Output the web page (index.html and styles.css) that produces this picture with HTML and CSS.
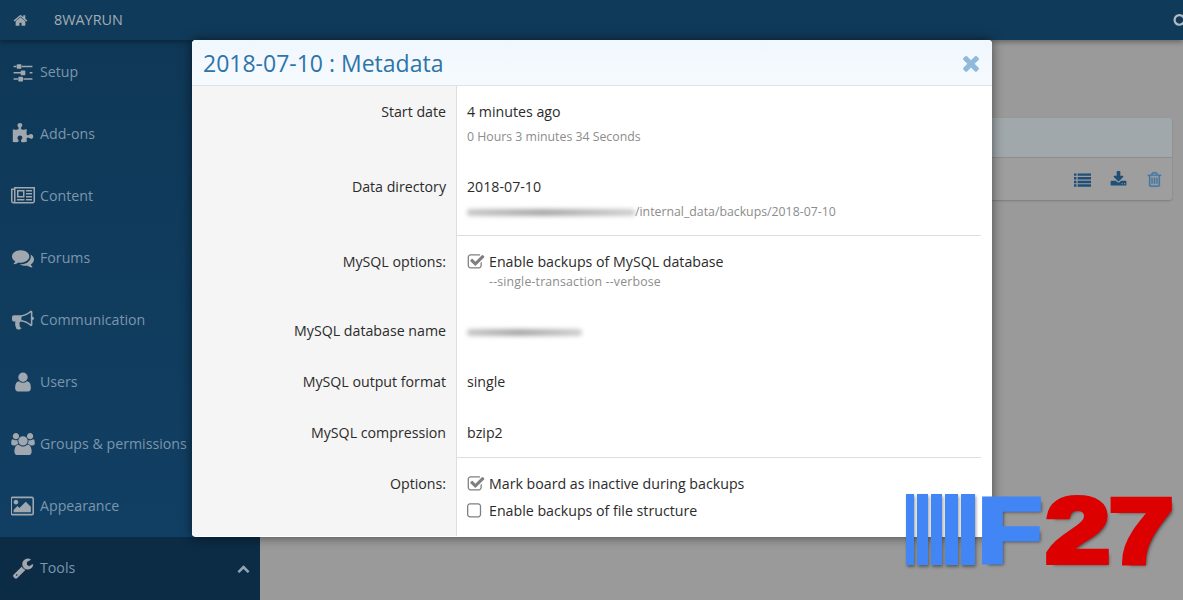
FILE: index.html
```html
<!DOCTYPE html>
<html lang="en">

<head>
    <meta charset="UTF-8">
    <title>2018-07-10 : Metadata</title>
    <link rel="stylesheet" href="styles.css">
</head>

<body>
    <svg class="defs" width="0" height="0">
        <symbol id="i-home" viewBox="0 0 1792 1792"><path d="M1472 992v480q0 26-19 45t-45 19h-384v-384h-256v384h-384q-26 0-45-19t-19-45v-480q0-1 .5-3t.5-3l575-474 575 474q1 2 1 6zm223-69l-62 74q-8 9-21 11h-3q-13 0-21-7l-692-577-692 577q-12 8-24 7-13-2-21-11l-62-74q-8-10-7-23.5t11-21.5l719-599q32-26 76-26t76 26l244 204v-195q0-14 9-23t23-9h192q14 0 23 9t9 23v408l219 182q10 8 11 21.5t-7 23.5z"/></symbol>
        <symbol id="i-search" viewBox="0 0 1792 1792"><path d="M1216 832q0-185-131.5-316.5t-316.5-131.5-316.5 131.5-131.5 316.5 131.5 316.5 316.5 131.5 316.5-131.5 131.5-316.5zm512 832q0 52-38 90t-90 38q-54 0-90-38l-343-342q-179 124-399 124-143 0-273.5-55.5t-225-150-150-225-55.5-273.5 55.5-273.5 150-225 225-150 273.5-55.5 273.5 55.5 225 150 150 225 55.5 273.5q0 220-124 399l343 343q37 37 37 90z"/></symbol>
        <symbol id="i-sliders" viewBox="0 0 1792 1792"><path d="M480 1408v128h-352v-128h352zm352-128q26 0 45 19t19 45v256q0 26-19 45t-45 19h-256q-26 0-45-19t-19-45v-256q0-26 19-45t45-19h256zm160-384v128h-864v-128h864zm-640-512v128h-224v-128h224zm1312 1024v128h-736v-128h736zm-960-1152q26 0 45 19t19 45v256q0 26-19 45t-45 19h-256q-26 0-45-19t-19-45v-256q0-26 19-45t45-19h256zm320 512q26 0 45 19t19 45v256q0 26-19 45t-45 19h-256q-26 0-45-19t-19-45v-256q0-26 19-45t45-19h256zm640 128v128h-224v-128h224zm0-512v128h-864v-128h864z"/></symbol>
        <symbol id="i-puzzle" viewBox="0 0 1792 1792"><path d="M1728 1098q0 81-44.5 135t-123.5 54q-41 0-77.5-17.5t-59-38-56.5-38-71-17.5q-110 0-110 124 0 39 16 115t15 115v5q-22 0-33 1-34 3-97.5 11.5t-115.5 13.5-98 5q-61 0-103-26.5t-42-83.5q0-37 17.5-71t38-56.5 38-59 17.5-77.5q0-79-54-123.5t-135-44.5q-84 0-143 45.5t-59 127.5q0 43 15 83t33.5 64.5 33.5 53 15 50.5q0 45-46 89-37 35-117 35-95 0-245-24-9-2-27.5-4t-27.5-4l-13-2q-1 0-3-1-2 0-2-1v-1024q2 1 17.5 3.5t34 5 21.5 3.5q150 24 245 24 80 0 117-35 46-44 46-89 0-22-15-50.5t-33.5-53-33.5-64.5-15-83q0-82 59-127.5t144-45.5q80 0 134 44.5t54 123.5q0 41-17.5 77.5t-38 59-38 56.5-17.5 71q0 57 42 83.5t103 26.5q64 0 180-15t163-17v2q-1 2-3.5 17.5t-5 34-3.5 21.5q-24 150-24 245 0 80 35 117 44 46 89 46 22 0 50.5-15t53-33.5 64.5-33.5 83-15q82 0 127.5 59t45.5 143z"/></symbol>
        <symbol id="i-news" viewBox="0 0 2048 1792"><path d="M1024 512h-384v384h384v-384zm128 640v128h-640v-128h640zm0-768v640h-640v-640h640zm640 768v128h-512v-128h512zm0-256v128h-512v-128h512zm0-256v128h-512v-128h512zm0-256v128h-512v-128h512zm-1536 960v-960h-128v960q0 26 19 45t45 19 45-19 19-45zm1664 0v-1088h-1536v1088q0 33-11 64h1483q26 0 45-19t19-45zm128-1216v1216q0 80-56 136t-136 56h-1664q-80 0-136-56t-56-136v-1088h256v-128h1792z"/></symbol>
        <symbol id="i-comments" viewBox="0 0 1792 1792"><path d="M1408 768q0 139-94 257t-256.5 186.5-353.5 68.5q-86 0-176-16-124 88-278 128-36 9-86 16h-3q-11 0-20.5-8t-11.5-21q-1-3-1-6.5t.5-6.5 2-6l2.5-5 3.5-5.5 4-5 4.5-5 4-4.5q5-6 23-25t26-29.5 22.5-29 25-38.5 20.5-44q-124-72-195-177t-71-224q0-139 94-257t256.5-186.5 353.5-68.5 353.5 68.5 256.5 186.5 94 257zm384 256q0 120-71 224.5t-195 176.5q10 24 20.5 44t25 38.5 22.5 29 26 29.5 23 25q1 1 4 4.5t4.5 5 4 5 3.5 5.5l2.5 5 2 6 .5 6.5-1 6.5q-3 14-13 22t-22 7q-50-7-86-16-154-40-278-128-90 16-176 16-271 0-472-132 58 4 88 4 161 0 309-45t264-129q125-92 192-212t67-254q0-77-23-152 129 71 204 178t75 230z"/></symbol>
        <symbol id="i-bullhorn" viewBox="0 0 1792 1792"><path d="M1664 640q53 0 90.5 37.5t37.5 90.5-37.5 90.5-90.5 37.5v384q0 52-38 90t-90 38q-417-347-812-380-58 19-91 66t-31 100.5 40 92.5q-20 33-23 65.5t6 58 33.5 55 48 50 61.5 50.5q-29 58-111.5 83t-168.5 11.5-132-55.5q-7-23-29.5-87.5t-32-94.5-23-89-15-101 3.5-98.5 22-110.5h-122q-66 0-113-47t-47-113v-192q0-66 47-113t113-47h480q435 0 896-384 52 0 90 38t38 90v384zm-128 604v-954q-394 302-768 343v270q377 42 768 341z"/></symbol>
        <symbol id="i-user" viewBox="0 0 1792 1792"><path d="M1536 1399q0 109-62.5 187t-150.5 78h-854q-88 0-150.5-78t-62.5-187q0-85 8.5-160.5t31.5-152 58.5-131 94-89 134.5-34.5q131 128 313 128t313-128q76 0 134.5 34.5t94 89 58.5 131 31.5 152 8.5 160.5zm-256-887q0 159-112.5 271.5t-271.5 112.5-271.5-112.5-112.5-271.5 112.5-271.5 271.5-112.5 271.5 112.5 112.5 271.5z"/></symbol>
        <symbol id="i-users" viewBox="0 0 1920 1792"><path d="M593 896q-162 5-265 128h-134q-82 0-138-40.5t-56-118.5q0-353 124-353 6 0 43.5 21t97.5 42.5 119 21.5q67 0 133-23-5 37-5 66 0 139 81 256zm1071 637q0 120-73 189.5t-194 69.5h-874q-121 0-194-69.5t-73-189.5q0-53 3.5-103.5t14-109 26.5-108.5 43-97.5 62-81 85.5-53.5 111.5-20q10 0 43 21.5t73 48 107 48 135 21.5 135-21.5 107-48 73-48 43-21.5q61 0 111.5 20t85.5 53.5 62 81 43 97.5 26.5 108.5 14 109 3.5 103.5zm-1024-1277q0 106-75 181t-181 75-181-75-75-181 75-181 181-75 181 75 75 181zm704 384q0 159-112.5 271.5t-271.5 112.5-271.5-112.5-112.5-271.5 112.5-271.5 271.5-112.5 271.5 112.5 112.5 271.5zm576 225q0 78-56 118.5t-138 40.5h-134q-103-123-265-128 81-117 81-256 0-29-5-66 66 23 133 23 59 0 119-21.5t97.5-42.5 43.5-21q124 0 124 353zm-128-609q0 106-75 181t-181 75-181-75-75-181 75-181 181-75 181 75 75 181z"/></symbol>
        <symbol id="i-image" viewBox="0 0 1920 1792"><path d="M576 576q0 80-56 136t-136 56-136-56-56-136 56-136 136-56 136 56 56 136zm1024 384v448h-1408v-192l320-320 160 160 512-512zm96-704h-1600q-13 0-22.5 9.5t-9.5 22.5v1216q0 13 9.5 22.5t22.5 9.5h1600q13 0 22.5-9.5t9.5-22.5v-1216q0-13-9.5-22.5t-22.5-9.5zm160 32v1216q0 66-47 113t-113 47h-1600q-66 0-113-47t-47-113v-1216q0-66 47-113t113-47h1600q66 0 113 47t47 113z"/></symbol>
        <symbol id="i-wrench" viewBox="0 0 1792 1792"><path d="M448 1472q0-26-19-45t-45-19-45 19-19 45 19 45 45 19 45-19 19-45zm644-420l-682 682q-37 37-90 37-52 0-91-37l-106-108q-38-36-38-90 0-53 38-91l681-681q39 98 114.5 173.5t173.5 114.5zm634-435q0 39-23 106-47 134-164.5 217.5t-258.5 83.5q-185 0-316.5-131.5t-131.5-316.5 131.5-316.5 316.5-131.5q58 0 121.5 16.5t107.5 46.5q16 11 16 28t-16 28l-293 169v224l193 107q5-3 79-48.5t135.5-81 70.5-35.5q15 0 23.5 10t8.5 25z"/></symbol>
        <symbol id="i-up" viewBox="0 0 1792 1792"><path d="M1683 1331l-166 165q-19 19-45 19t-45-19l-531-531-531 531q-19 19-45 19t-45-19l-166-165q-19-19-19-45.5t19-45.5l742-741q19-19 45-19t45 19l742 741q19 19 19 45.5t-19 45.5z"/></symbol>
        <symbol id="i-times" viewBox="0 0 1792 1792"><path d="M1490 1322q0 40-28 68l-136 136q-28 28-68 28t-68-28l-294-294-294 294q-28 28-68 28t-68-28l-136-136q-28-28-28-68t28-68l294-294-294-294q-28-28-28-68t28-68l136-136q28-28 68-28t68 28l294 294 294-294q28-28 68-28t68 28l136 136q28 28 28 68t-28 68l-294 294 294 294q28 28 28 68z"/></symbol>
        <symbol id="i-list" viewBox="0 0 1792 1792"><path d="M0 256h256v256h-256zM384 256h1408v256h-1408zM0 640h256v256h-256zM384 640h1408v256h-1408zM0 1024h256v256h-256zM384 1024h1408v256h-1408zM0 1408h256v256h-256zM384 1408h1408v256h-1408z"/></symbol>
        <symbol id="i-download" viewBox="0 0 1792 1792"><path d="M1344 1344q0-26-19-45t-45-19-45 19-19 45 19 45 45 19 45-19 19-45zm256 0q0-26-19-45t-45-19-45 19-19 45 19 45 45 19 45-19 19-45zm128-224v320q0 40-28 68t-68 28h-1472q-40 0-68-28t-28-68v-320q0-40 28-68t68-28h465l135 136q58 56 136 56t136-56l136-136h464q40 0 68 28t28 68zm-325-569q17 41-14 70l-448 448q-18 19-45 19t-45-19l-448-448q-31-29-14-70 17-39 59-39h256v-448q0-26 19-45t45-19h256q26 0 45 19t19 45v448h256q42 0 59 39z"/></symbol>
        <symbol id="i-trash" viewBox="0 0 1792 1792"><path d="M704 736v576q0 14-9 23t-23 9h-64q-14 0-23-9t-9-23v-576q0-14 9-23t23-9h64q14 0 23 9t9 23zm256 0v576q0 14-9 23t-23 9h-64q-14 0-23-9t-9-23v-576q0-14 9-23t23-9h64q14 0 23 9t9 23zm256 0v576q0 14-9 23t-23 9h-64q-14 0-23-9t-9-23v-576q0-14 9-23t23-9h64q14 0 23 9t9 23zm128 724v-948h-896v948q0 22 7 40.5t14.5 27 10.5 8.5h832q3 0 10.5-8.5t14.5-27 7-40.5zm-672-1076h448l-48-117q-7-9-17-11h-317q-10 2-17 11zm928 32v64q0 14-9 23t-23 9h-96v948q0 83-47 143.5t-113 60.5h-832q-66 0-113-58.5t-47-141.5v-952h-96q-14 0-23-9t-9-23v-64q0-14 9-23t23-9h309l70-167q15-37 54-63t79-26h320q40 0 79 26t54 63l70 167h309q14 0 23 9t9 23z"/></symbol>
        <symbol id="i-checked" viewBox="0 0 1792 1792"><path d="M1472 930v318q0 119-84.5 203.5t-203.5 84.5h-832q-119 0-203.5-84.5t-84.5-203.5v-832q0-119 84.5-203.5t203.5-84.5h832q63 0 117 25 15 7 18 23 3 17-9 29l-49 49q-10 10-23 10-3 0-9-2-23-6-45-6h-832q-66 0-113 47t-47 113v832q0 66 47 113t113 47h832q66 0 113-47t47-113v-254q0-13 9-22l64-64q10-10 23-10 6 0 12 3 20 8 20 29zm231-489l-814 814q-24 24-57 24t-57-24l-430-430q-24-24-24-57t24-57l110-110q24-24 57-24t57 24l263 263 647-647q24-24 57-24t57 24l110 110q24 24 24 57t-24 57z"/></symbol>
        <symbol id="i-unchecked" viewBox="0 0 1792 1792"><path d="M1120 256h-832q-66 0-113 47t-47 113v832q0 66 47 113t113 47h832q66 0 113-47t47-113v-832q0-66-47-113t-113-47zm288 160v832q0 119-84.5 203.5t-203.5 84.5h-832q-119 0-203.5-84.5t-84.5-203.5v-832q0-119 84.5-203.5t203.5-84.5h832q119 0 203.5 84.5t84.5 203.5z"/></symbol>
    </svg>

    <div class="topbar">
        <svg class="top_home"><use href="#i-home"/></svg>
        <span class="board_name">8WAYRUN</span>
        <svg class="top_search"><use href="#i-search"/></svg>
    </div>

    <div class="wrapper">
        <div class="sidebar">
            <a class="nav_item"><svg class="nav_icon"><use href="#i-sliders"/></svg><span>Setup</span></a>
            <a class="nav_item"><svg class="nav_icon"><use href="#i-puzzle"/></svg><span>Add-ons</span></a>
            <a class="nav_item"><svg class="nav_icon"><use href="#i-news"/></svg><span>Content</span></a>
            <a class="nav_item"><svg class="nav_icon"><use href="#i-comments"/></svg><span>Forums</span></a>
            <a class="nav_item"><svg class="nav_icon"><use href="#i-bullhorn"/></svg><span>Communication</span></a>
            <a class="nav_item"><svg class="nav_icon"><use href="#i-user"/></svg><span>Users</span></a>
            <a class="nav_item"><svg class="nav_icon"><use href="#i-users"/></svg><span>Groups &amp; permissions</span></a>
            <a class="nav_item"><svg class="nav_icon"><use href="#i-image"/></svg><span>Appearance</span></a>
            <a class="nav_item nav_active"><svg class="nav_icon"><use href="#i-wrench"/></svg><span>Tools</span><svg class="nav_arrow"><use href="#i-up"/></svg></a>
        </div>

        <div class="main">
            <div class="block">
                <div class="block_header"></div>
                <div class="block_row">
                    <svg class="action action_dark"><use href="#i-list"/></svg>
                    <svg class="action action_dark"><use href="#i-download"/></svg>
                    <svg class="action action_blue"><use href="#i-trash"/></svg>
                </div>
            </div>
        </div>
    </div>

    <div class="modal">
        <div class="modal_header">
            <span class="modal_title">2018-07-10 : Metadata</span>
            <svg class="modal_close"><use href="#i-times"/></svg>
        </div>

        <div class="row">
            <div class="row_label">Start date</div>
            <div class="row_value">
                <div>4 minutes ago</div>
                <div class="hint hint_gap">0 Hours 3 minutes 34 Seconds</div>
            </div>
        </div>
        <div class="row">
            <div class="row_label">Data directory</div>
            <div class="row_value row_split">
                <div>2018-07-10</div>
                <div class="hint hint_gap"><span class="smudge smudge_path"></span>/internal_data/backups/2018-07-10</div>
            </div>
        </div>
        <div class="row">
            <div class="row_label">MySQL options:</div>
            <div class="row_value">
                <div class="check"><svg class="check_box"><use href="#i-checked"/></svg>Enable backups of MySQL database</div>
                <div class="hint check_hint">--single-transaction --verbose</div>
            </div>
        </div>
        <div class="row">
            <div class="row_label">MySQL database name</div>
            <div class="row_value"><span class="smudge smudge_name"></span></div>
        </div>
        <div class="row">
            <div class="row_label">MySQL output format</div>
            <div class="row_value">single</div>
        </div>
        <div class="row">
            <div class="row_label">MySQL compression</div>
            <div class="row_value row_split">bzip2</div>
        </div>
        <div class="row">
            <div class="row_label">Options:</div>
            <div class="row_value">
                <div class="check"><svg class="check_box"><use href="#i-checked"/></svg>Mark board as inactive during backups</div>
                <div class="check check_next"><svg class="check_box"><use href="#i-unchecked"/></svg>Enable backups of file structure</div>
            </div>
        </div>
    </div>

    <div class="logo">
        <div class="logo_bars">
            <i class="bar_a"></i>
            <i class="bar_b"></i>
            <i class="bar_b"></i>
            <i class="bar_c"></i>
            <i class="bar_d"></i>
        </div>
        <span class="logo_f">F</span>
        <span class="logo_num">27</span>
    </div>
</body>

</html>
```

FILE: styles.css
```css
* {
    margin: 0;
    padding: 0;
    box-sizing: border-box;
}

html,
body {
    height: 600px;
    overflow: hidden;
}

body {
    position: relative;
    background-color: #9a9a9a;
    font-family: 'Open Sans', sans-serif;
    font-size: 14.2px;
    line-height: 20px;
    color: #2b2b2b;
}

.defs {
    position: absolute;
}

.topbar {
    position: relative;
    z-index: 1;
    display: flex;
    align-items: center;
    height: 40px;
    padding-left: 13px;
    background-color: #103a5a;
    box-shadow: 0 2px 5px rgba(0, 0, 0, 0.35);
    color: #a3adb5;
}

.top_home {
    width: 15px;
    height: 15px;
    fill: #a0a8ae;
}

.board_name {
    margin-left: 26px;
    font-size: 14.4px;
}

.top_search {
    width: 15px;
    height: 15px;
    margin-left: auto;
    margin-right: -5px;
    fill: #b4bcc2;
}

.wrapper {
    display: flex;
    height: 560px;
}

.sidebar {
    width: 260px;
    padding-top: 1px;
    background: linear-gradient(to bottom, #0f3857, #114065);
}

.nav_item {
    display: flex;
    align-items: center;
    height: 62px;
    padding-left: 11px;
    color: #7b96ad;
}

.nav_icon {
    flex: none;
    width: 24px;
    height: 22px;
    margin-right: 5px;
    fill: #a0a7ae;
}

.nav_active {
    height: 63px;
    padding-bottom: 1px;
    background-color: #0c2b45;
}

.nav_arrow {
    width: 13px;
    height: 13px;
    margin-left: auto;
    margin-right: 10px;
    fill: #8fa3b4;
}

.main {
    flex: 1;
    padding: 78px 11px 0 40px;
}

.block {
    border-radius: 3px;
    box-shadow: 0 1px 2px rgba(0, 0, 0, 0.2);
}

.block_header {
    height: 40px;
    background-color: #a1a8ac;
    border-bottom: 1px solid #8d8d8d;
    border-radius: 3px 3px 0 0;
}

.block_row {
    display: flex;
    justify-content: flex-end;
    align-items: center;
    height: 42px;
    padding-right: 9px;
    background-color: #9e9e9e;
    border-radius: 0 0 3px 3px;
}

.action {
    width: 17px;
    height: 19px;
    margin-left: 19px;
}

.action_dark {
    fill: #1f4f78;
}

.action_blue {
    fill: #3f78a8;
    stroke: #3f78a8;
    stroke-width: 30;
}

.modal {
    position: absolute;
    z-index: 2;
    top: 40px;
    left: 192px;
    width: 800px;
    height: 497px;
    overflow: hidden;
    background-color: #fff;
    border-radius: 4px;
    box-shadow: 0 0 12px rgba(0, 0, 0, 0.55);
}

.modal_header {
    display: flex;
    justify-content: space-between;
    align-items: center;
    height: 46px;
    padding: 0 9px 0 11px;
    background: linear-gradient(to bottom, #f0f7fd, #f5fafe);
    border-bottom: 1px solid #dfe3e6;
}

.modal_title {
    color: #2f74a8;
    font-size: 23px;
}

.modal_close {
    width: 24px;
    height: 24px;
    fill: #8fbadb;
}

.row {
    display: flex;
}

.row_label {
    flex: none;
    width: 265px;
    padding: 16px 10px 15px 0;
    background-color: #f5f5f5;
    border-right: 1px solid #dedede;
    text-align: right;
}

.row_value {
    flex: 1;
    margin-right: 11px;
    padding: 16px 0 15px 10px;
}

.row_split {
    padding-bottom: 14px;
    border-bottom: 1px solid #dedede;
}

.hint {
    color: #8c8c8c;
    font-size: 12.3px;
}

.hint_gap {
    margin-top: 6px;
    line-height: 18px;
}

.check {
    display: flex;
    align-items: center;
}

.check_next {
    margin-top: 7px;
}

.check_box {
    flex: none;
    width: 18px;
    height: 18px;
    margin-right: 4px;
    fill: #7f7f7f;
}

.check_hint {
    margin-bottom: -2px;
    padding-left: 22px;
    letter-spacing: 0.17px;
}

.smudge {
    display: inline-block;
    height: 7px;
    background: linear-gradient(to right, #c8c8c8, #a8a8a8 45%, #cfcfcf);
    border-radius: 3px;
    filter: blur(2px);
    vertical-align: middle;
}

.smudge_path {
    width: 168px;
}

.smudge_name {
    width: 115px;
}

.logo {
    position: absolute;
    z-index: 3;
    top: 494px;
    left: 906px;
    display: flex;
    height: 71px;
    align-items: stretch;
}

.logo_bars {
    display: flex;
    gap: 3px;
    margin-right: 3px;
}

.logo_bars i {
    display: block;
    background-color: #4285f5;
    box-shadow: 1px 2px 3px rgba(0, 0, 0, 0.4);
}

.bar_a {
    width: 8px;
}

.bar_b {
    width: 11px;
}

.bar_c {
    width: 13px;
}

.bar_d {
    width: 14px;
}

.logo_f,
.logo_num {
    font-family: 'Liberation Sans', sans-serif;
    font-size: 90px;
    font-weight: bold;
    line-height: 74px;
    transform-origin: left center;
    text-shadow: 3px 3px 3px rgba(0, 0, 0, 0.55);
}

.logo_f {
    color: #4285f5;
    -webkit-text-stroke: 5px #4285f5;
    transform: scaleX(1.16);
}

.logo_num {
    margin-left: 13px;
    color: #dc0000;
    -webkit-text-stroke: 6px #dc0000;
    transform: scaleX(1.27);
}
```
